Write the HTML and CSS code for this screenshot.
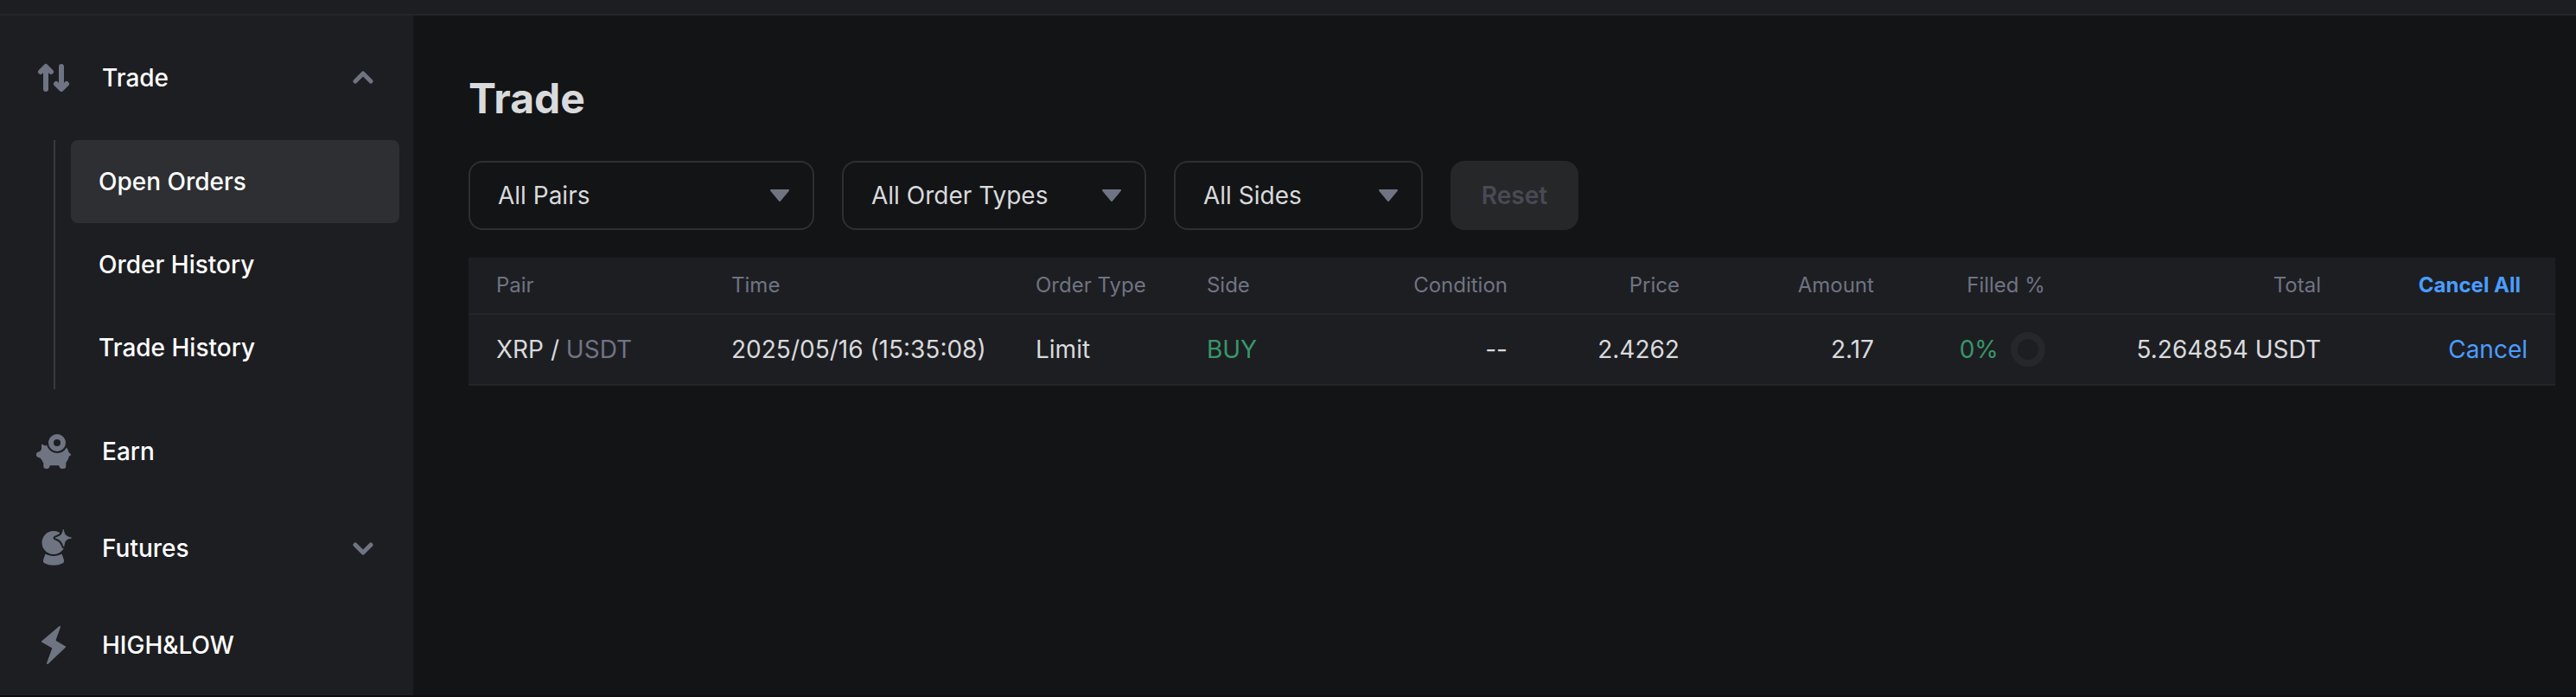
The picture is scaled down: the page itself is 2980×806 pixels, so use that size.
FILE: index.html
```html
<!DOCTYPE html>
<html lang="en">
<head>
<meta charset="utf-8">
<title>Trade – Open Orders</title>
<link rel="stylesheet" href="styles.css">
</head>
<body>
<div class="app">
  <header class="topbar"></header>
  <div class="layout">
    <nav class="sidebar">
      <button class="nav-item" type="button" aria-expanded="true">
        <svg class="nav-icon" viewBox="0 0 48 48" fill="none" stroke="currentColor" stroke-width="6" stroke-linecap="round" stroke-linejoin="round"><path d="M15 37V12M9 17L15 11L21 17M33 11V36M27 31L33 37L39 31"/></svg>
        <span class="nav-label">Trade</span>
        <svg class="chevron" viewBox="0 0 24 24"><path d="M3 16L12 7L21 16"/></svg>
      </button>
      <div class="submenu">
        <a class="sub-item active" href="#open">Open Orders</a>
        <a class="sub-item" href="#orders">Order History</a>
        <a class="sub-item" href="#trades">Trade History</a>
      </div>
      <a class="nav-item" href="#earn">
        <svg class="nav-icon" viewBox="0 0 48 48" fill="currentColor"><path fill-rule="evenodd" d="M28 4a10 10 0 1 0 0 20a10 10 0 1 0 0-20zM28 10a4 4 0 1 1 0 8a4 4 0 1 1 0-8z"/><path d="M10 16.500Q10 15.500 11 15.800L14 17.500L16 16.800C18 22 22.500 26 28 26C33 26 37 23.500 38.700 19.600C40 20.800 41 22.500 41.500 25L43.700 27C44.200 27.700 44 28.500 43.500 28.800L42 29.600C41.300 32.500 40 35 38.300 37V41Q38.300 44 35.300 44H33.500Q30.700 44 30.300 40.200H19.700Q19.300 44 16.500 44H15.500Q12.300 44 12.300 41V37.500C11 36 10.500 33 8.500 31.700L5.500 30.500Q4 30 4 28.500V27Q4 25.700 5.500 25L8.500 23.800C9 22.500 10 22 10 21z"/></svg>
        <span class="nav-label">Earn</span>
      </a>
      <button class="nav-item" type="button" aria-expanded="false">
        <svg class="nav-icon" viewBox="0 0 48 48" fill="currentColor"><circle cx="24" cy="17.500" r="13.500"/><path class="cut" d="M35.300 2.500C36.200 8 38 10.500 44.500 12C38 13.500 36.700 15.500 35.800 21.800C34 16.500 32 14 26.200 12C32 10 34.200 8.500 35.300 2.500z"/><path stroke="currentColor" stroke-width="1" stroke-linejoin="round" d="M35.300 2.500C36.200 8 38 10.500 44.500 12C38 13.500 36.700 15.500 35.800 21.800C34 16.500 32 14 26.200 12C32 10 34.200 8.500 35.300 2.500z"/><path d="M14.500 30.500C20 33.700 28 33.700 33.500 30.500L36 37.500Q36.500 40.500 34 41.500C28 44.500 20 44.500 14 41.500Q11.500 40.500 12 37.500z"/></svg>
        <span class="nav-label">Futures</span>
        <svg class="chevron" viewBox="0 0 24 24"><path d="M3 8L12 17L21 8"/></svg>
      </button>
      <a class="nav-item" href="#highlow">
        <svg class="nav-icon" viewBox="0 0 48 48" fill="currentColor" stroke="currentColor" stroke-width="2" stroke-linejoin="round"><path d="M31 3L11 20L22.500 26.500Q23.300 27.300 23 28.500L17 45L37 26L26.500 19.800Q25.500 19 25.800 17.500z"/></svg>
        <span class="nav-label">HIGH&amp;LOW</span>
      </a>
    </nav>
    <main class="content">
      <h1 class="title">Trade</h1>
      <form class="filters">
        <div class="select-box pairs">
          <select aria-label="Pair"><option>All Pairs</option></select>
          <svg class="caret" viewBox="0 0 24 16"><path d="M2 2H22L12 14z"/></svg>
        </div>
        <div class="select-box types">
          <select aria-label="Order type"><option>All Order Types</option></select>
          <svg class="caret" viewBox="0 0 24 16"><path d="M2 2H22L12 14z"/></svg>
        </div>
        <div class="select-box sides">
          <select aria-label="Side"><option>All Sides</option></select>
          <svg class="caret" viewBox="0 0 24 16"><path d="M2 2H22L12 14z"/></svg>
        </div>
        <button class="reset" type="reset" disabled>Reset</button>
      </form>
      <table class="orders">
        <colgroup>
          <col class="c-pair"><col class="c-time"><col class="c-type"><col class="c-side"><col class="c-cond"><col class="c-price"><col class="c-amount"><col class="c-filled"><col class="c-total"><col class="c-action">
        </colgroup>
        <thead>
          <tr>
            <th>Pair</th><th>Time</th><th>Order Type</th><th>Side</th>
            <th class="num">Condition</th><th class="num">Price</th><th class="num">Amount</th><th class="num">Filled %</th><th class="num">Total</th>
            <th class="num action"><button class="cancel-all" type="button">Cancel All</button></th>
          </tr>
        </thead>
        <tbody>
          <tr>
            <td>XRP / <span class="quote">USDT</span></td>
            <td>2025/05/16 (15:35:08)</td>
            <td>Limit</td>
            <td class="buy">BUY</td>
            <td class="num">--</td>
            <td class="num">2.4262</td>
            <td class="num">2.17</td>
            <td class="buy"><div class="filled"><span>0%</span><span class="ring"></span></div></td>
            <td class="num">5.264854 USDT</td>
            <td class="num"><button class="cancel" type="button">Cancel</button></td>
          </tr>
        </tbody>
      </table>
    </main>
  </div>
</div>
</body>
</html>
```
FILE: styles.css
```css
* {
  box-sizing: border-box;
}

body {
  margin: 0;
  background: #131416;
  color: #d9dadc;
  font-family: Inter, "Liberation Sans", sans-serif;
  font-size: 28px;
  line-height: 40px;
}

button,
select {
  margin: 0;
  padding: 0;
  border: 0;
  background: none;
  color: inherit;
  font: inherit;
}

a {
  color: inherit;
  text-decoration: none;
}

.app {
  display: flex;
  flex-direction: column;
  min-height: 100vh;
  border-bottom: 2px solid #110d12;
}

.topbar {
  height: 18px;
  background: #1d1e22;
  border-bottom: 2px solid #242529;
}

.layout {
  display: flex;
  flex: 1;
}

/* Sidebar */
.sidebar {
  flex: none;
  width: 478px;
  padding-top: 16px;
  background: #1d1e22;
  color: #fff;
  font-weight: 500;
}

.nav-item {
  display: flex;
  align-items: center;
  gap: 32px;
  width: 100%;
  height: 112px;
  padding: 0 46px 0 38px;
  text-align: left;
}

.nav-label {
  flex: 1;
}

.nav-icon {
  width: 48px;
  height: 48px;
  color: #6f7482;
}

.cut {
  fill: #1d1e22;
  stroke: #1d1e22;
  stroke-width: 5;
  stroke-linejoin: round;
}

.chevron {
  width: 24px;
  height: 24px;
  fill: none;
  stroke: #6f7482;
  stroke-width: 5;
  stroke-linecap: round;
  stroke-linejoin: round;
}

.submenu {
  margin: 16px 16px 16px 62px;
  padding-left: 18px;
  border-left: 2px solid #393a3f;
}

.sub-item {
  display: block;
  padding: 28px 32px;
  border-radius: 8px;
}

.sub-item.active {
  background: #2e2f33;
}

/* Content */
.content {
  flex: 1;
  min-width: 0;
  padding: 64px 24px 64px 64px;
}

.title {
  margin: 0 0 40px;
  font-size: 48px;
  line-height: 64px;
  font-weight: 700;
}

.filters {
  display: flex;
  gap: 32px;
  margin-bottom: 32px;
}

.select-box {
  position: relative;
}

.pairs {
  width: 400px;
}

.types {
  width: 352px;
}

.sides {
  width: 288px;
}

.select-box select {
  appearance: none;
  width: 100%;
  height: 80px;
  padding: 0 64px 0 32px;
  border: 2px solid #2e2f32;
  border-radius: 16px;
}

.caret {
  position: absolute;
  top: 32px;
  right: 28px;
  width: 24px;
  height: 16px;
  fill: #6f7482;
  stroke: #6f7482;
  stroke-width: 2;
  stroke-linejoin: round;
  pointer-events: none;
}

.reset {
  width: 148px;
  height: 80px;
  border-radius: 16px;
  background: #262729;
  color: #484a54;
  font-weight: 600;
}

/* Orders table */
.orders {
  width: 100%;
  table-layout: fixed;
  border-collapse: separate;
  border-spacing: 0;
  background: #1d1e22;
}

.orders th,
.orders td {
  padding: 0 32px;
  border-bottom: 2px solid #242529;
  text-align: left;
  white-space: nowrap;
}

.orders th {
  height: 66px;
  color: #6f7482;
  font-size: 24px;
  font-weight: 400;
}

.orders td {
  height: 82px;
}

.orders .num {
  text-align: right;
}

.orders .action {
  padding-right: 40px;
}

.orders .buy {
  color: #38966a;
}

.orders .quote {
  color: #6f7482;
}

.filled {
  display: flex;
  align-items: center;
  justify-content: flex-end;
  gap: 14px;
}

.ring {
  width: 40px;
  height: 40px;
  border: 8px solid #26272a;
  border-radius: 50%;
}

.cancel,
.cancel-all {
  color: #4a9dff;
}

.cancel-all {
  font-weight: 700;
}

.c-pair { width: 11.27%; }
.c-time { width: 14.58%; }
.c-type { width: 8.2%; }
.c-side { width: 5.39%; }
.c-cond { width: 11.68%; }
.c-price { width: 8.24%; }
.c-amount { width: 9.32%; }
.c-filled { width: 8.2%; }
.c-total { width: 13.22%; }
.c-action { width: 9.9%; }
```
